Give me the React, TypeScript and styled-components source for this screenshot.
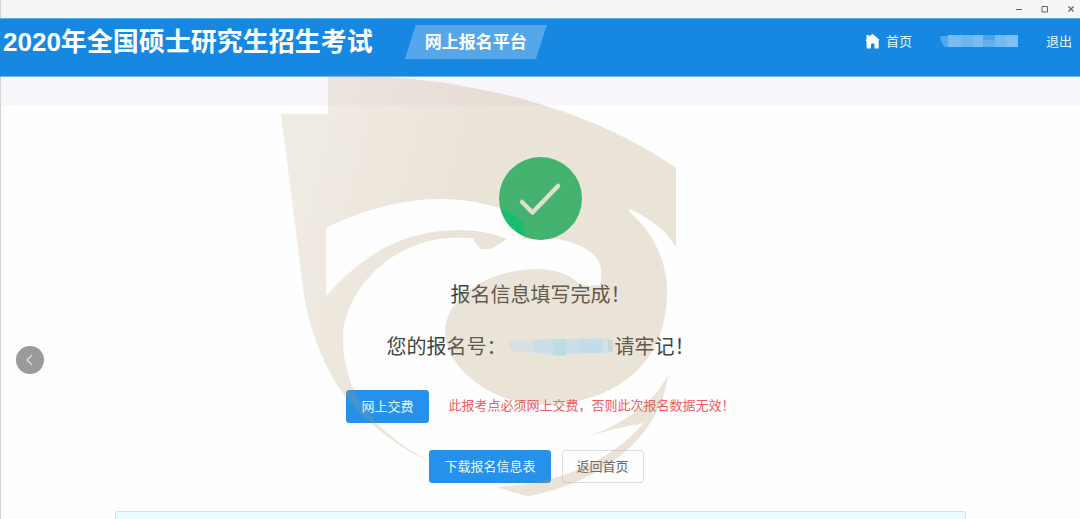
import React from 'react';
import styled, { createGlobalStyle } from 'styled-components';

const GlobalStyle = createGlobalStyle`
  *, *::before, *::after { box-sizing: border-box; }
  body {
    margin: 0;
    background: #fefefe;
    font-family: "Noto Sans", "Noto Sans CJK SC", sans-serif;
    color: #444;
  }
  button { font-family: inherit; cursor: pointer; }
  h1, p { margin: 0; }
`;

const Page = styled.div`
  position: relative;
  display: flex;
  flex-direction: column;
  min-height: 100vh;
  border-left: 1px solid #d4d4d4;
`;

const TitleBar = styled.div`
  display: flex;
  justify-content: flex-end;
  align-items: center;
  gap: 16px;
  height: 18px;
  padding-right: 4px;
  background: #f5f5f5;
`;

const WindowButton = styled.button`
  display: flex;
  align-items: center;
  justify-content: center;
  width: 10px;
  height: 16px;
  padding: 0;
  border: 0;
  background: none;
  color: #666;
`;

const Header = styled.header`
  display: flex;
  align-items: flex-start;
  justify-content: space-between;
  height: 59px;
  margin-left: -1px;
  padding: 6px 8px 0 3px;
  background: #1788e2;
  border-top: 1px solid #55b4ee;
  border-bottom: 1px solid #6fb8ea;
  color: #fff;
`;

const Brand = styled.div`
  display: flex;
  align-items: center;
  gap: 32px;
`;

const SiteTitle = styled.h1`
  font-family: "Liberation Sans", "Noto Sans CJK SC", sans-serif;
  font-size: 26px;
  line-height: 32px;
  font-weight: 700;
  white-space: nowrap;
`;

const PlatformTag = styled.span`
  padding: 0 20px;
  background: #54a7ea;
  clip-path: polygon(11px 0, 100% 0, calc(100% - 11px) 100%, 0 100%);
  font-size: 17px;
  line-height: 34px;
  font-weight: 700;
  white-space: nowrap;
`;

const Nav = styled.nav`
  display: flex;
  align-items: center;
  gap: 28px;
  height: 32px;
`;

const NavLink = styled.a`
  display: flex;
  align-items: center;
  gap: 6px;
  color: #e4f6ff;
  font-size: 13px;
  line-height: 20px;
  text-decoration: none;
`;

const Strip = styled.div`
  height: 28px;
  background: #f8f6fa;
`;

const Main = styled.main`
  display: flex;
  flex: 1;
  flex-direction: column;
  align-items: center;
  padding-top: 52px;
`;

const Message = styled.p`
  display: flex;
  align-items: center;
  font-size: 20px;
  line-height: 32px;
  margin-top: 20px;
  white-space: nowrap;

  &:first-of-type { margin-top: 39px; }
`;

const ActionRow = styled.div<{ $gap: number; $end?: number }>`
  display: flex;
  align-items: center;
  gap: ${({ $gap }) => $gap}px;
  margin-top: 27px;
  padding-right: ${({ $end }) => $end ?? 0}px;
`;

const Button = styled.button<{ $plain?: boolean }>`
  height: 33px;
  padding: 0 14px 1px;
  border: 1px solid ${({ $plain }) => ($plain ? '#dcdee2' : '#2591ea')};
  border-radius: 3px;
  background: ${({ $plain }) => ($plain ? '#fefefe' : '#2591ea')};
  color: ${({ $plain }) => ($plain ? '#606266' : '#e8f8ff')};
  font-size: 13px;
  line-height: 20px;
  white-space: nowrap;
`;

const Warning = styled.p`
  color: #f05a60;
  font-size: 13px;
  line-height: 20px;
  padding-bottom: 4px;
  white-space: nowrap;
`;

const Notice = styled.section`
  flex: 1;
  align-self: stretch;
  min-height: 8px;
  margin: 28px 114px 0;
  border: 1px solid #c2e8f1;
  border-bottom: 0;
  border-radius: 3px 3px 0 0;
  background: #ebfbff;
`;

const BackButton = styled.button`
  position: absolute;
  top: 346px;
  left: 15px;
  display: flex;
  align-items: center;
  justify-content: center;
  width: 28px;
  height: 28px;
  padding: 0;
  border: 0;
  border-radius: 50%;
  background: #9b9a9b;
`;

const Watermark = styled.svg`
  position: absolute;
  top: 74px;
  left: calc(50% - 261px);
  width: 400px;
  height: 424px;
  pointer-events: none;
`;

const NumberMask = styled.svg`
  position: relative;
  z-index: 1;
`;

const HomeIcon = () => (
  <svg width="15" height="16" viewBox="0 0 15 16" aria-hidden="true">
    <path
      fill="#fff"
      d="M1.500 2h2.500v1.500L7.500.8l6.700 5.700-.5 1.500V15.500H9.500v-3.800q0-1.500-1.800-1.500t-1.800 1.500V15.500H1.600V8.500L.7 7.200l.8-1.200z"
    />
  </svg>
);

const MaskedAccount = () => (
  <svg width="78" height="12" viewBox="0 0 78 12" role="img" aria-label="account">
    <path fill="#4fa7ee" d="M0 1h9v11H5Q1 9 0 1z" />
    <rect x="8" width="13" height="12" fill="#78bbf3" />
    <rect x="21" width="12" height="12" fill="#6db5f1" />
    <rect x="33" width="10" height="12" fill="#7abcf2" />
    <rect x="43" width="12" height="12" fill="#62aef0" />
    <rect x="55" width="11" height="12" fill="#75b9f2" />
    <rect x="66" width="12" height="12" fill="#7fc0f4" />
    <rect x="43" width="12" height="5" fill="#4ea2ea" />
  </svg>
);

const MaskedNumber = () => (
  <NumberMask width="108" height="20" viewBox="0 0 108 20" role="img" aria-label="number">
    <path fill="#d7e1e3" d="M3 4q24-3 48-2l52-1 3 4v11l-46 1q-10 3-20 0L5 14Q0 9 3 4z" />
    <path fill="#cbdee7" d="M26 3h20v14l-20-2z" />
    <path fill="#c0dbe8" d="M46 2h13v16q-8 2-13-1z" />
    <path fill="#cadfe8" d="M59 2h13v14H59z" />
    <path fill="#c2dcea" d="M72 2h24v14H72z" />
    <path fill="#cdd5d5" d="M101 3h4l1 3v9h-5z" />
  </NumberMask>
);

const SuccessIcon = () => (
  <svg width="83" height="83" viewBox="0 0 83 83" role="img" aria-label="success">
    <circle cx="41.5" cy="41.5" r="41.5" fill="#1cbc70" />
    <path
      d="M23 45l10.500 10.500L59 29"
      fill="none"
      stroke="#f1f6ee"
      strokeWidth="4.500"
      strokeLinecap="round"
      strokeLinejoin="round"
    />
  </svg>
);

const EagleWatermark = () => (
  <Watermark viewBox="280 74 400 424" aria-hidden="true">
    <defs>
      <linearGradient id="sand" gradientUnits="userSpaceOnUse" x1="281" y1="230" x2="440" y2="270">
        <stop offset="0" stopColor="#b2976d" stopOpacity="0.18" />
        <stop offset="1" stopColor="#b2976d" stopOpacity="0.26" />
      </linearGradient>
    </defs>
    <path
      fill="url(#sand)"
      d="M328 75C440 74 575 98 676 168V248C669 233 654 221 630 209Q628 210 631 213
         C652 232 667 259 667 292C667 372 605 405 540 405C500 404 448 375 445 333
         C445 296 490 269 537 269C555 269 570 275 580 284Q592 287 600 285Q602 277 601 270
         C601 254 579 242 557 239H522Q528 232 523 223Q517 214 500 208
         C477 201 459 199 440 199C400 199 361 211 326 228V296
         C343 277 372 248 414 236C445 227 482 228 507 239
         Q499 244 493 248Q487 250 481 249Q476 245 473 238Q456 237 440 239
         C389 246 344 290 343 338C343 388 368 430 433 463
         C390 445 356 412 337 385C318 353 309 325 304 295L281 114H328z"
    />
    <path
      fill="url(#sand)"
      d="M668 375C654 402 624 425 583 438Q614 428 644 423C609 463 557 484 497 487L523 495
         Q528 497 534 495C606 480 660 435 668 375z"
    />
  </Watermark>
);

export default function App() {
  return (
    <>
      <GlobalStyle />
      <Page>
        <TitleBar>
          <WindowButton aria-label="最小化">
            <svg width="8" height="8" viewBox="0 0 8 8"><path d="M1 4.500h6" stroke="currentColor" /></svg>
          </WindowButton>
          <WindowButton aria-label="最大化">
            <svg width="8" height="8" viewBox="0 0 8 8"><path d="M1 1.500h5.500v5.500H1z" fill="none" stroke="currentColor" /></svg>
          </WindowButton>
          <WindowButton aria-label="关闭">
            <svg width="8" height="8" viewBox="0 0 8 8"><path d="M1.500 1.500l5 5m0-5l-5 5" stroke="currentColor" strokeWidth="1.300" /></svg>
          </WindowButton>
        </TitleBar>
        <Header>
          <Brand>
            <SiteTitle>2020年全国硕士研究生招生考试</SiteTitle>
            <PlatformTag>网上报名平台</PlatformTag>
          </Brand>
          <Nav>
            <NavLink href="#home"><HomeIcon />首页</NavLink>
            <MaskedAccount />
            <NavLink href="#logout">退出</NavLink>
          </Nav>
        </Header>
        <Strip />
        <Main>
          <SuccessIcon />
          <Message>报名信息填写完成！</Message>
          <Message>您的报名号：<MaskedNumber />请牢记！</Message>
          <ActionRow $gap={20}>
            <Button>网上交费</Button>
            <Warning>此报考点必须网上交费，否则此次报名数据无效！</Warning>
          </ActionRow>
          <ActionRow $gap={11} $end={8}>
            <Button>下载报名信息表</Button>
            <Button $plain>返回首页</Button>
          </ActionRow>
          <Notice />
        </Main>
        <BackButton aria-label="返回">
          <svg width="14" height="14" viewBox="0 0 14 14">
            <path d="M9 2L4 7l5 5" fill="none" stroke="#d6d6d6" strokeWidth="1.500" />
          </svg>
        </BackButton>
        <EagleWatermark />
      </Page>
    </>
  );
}
